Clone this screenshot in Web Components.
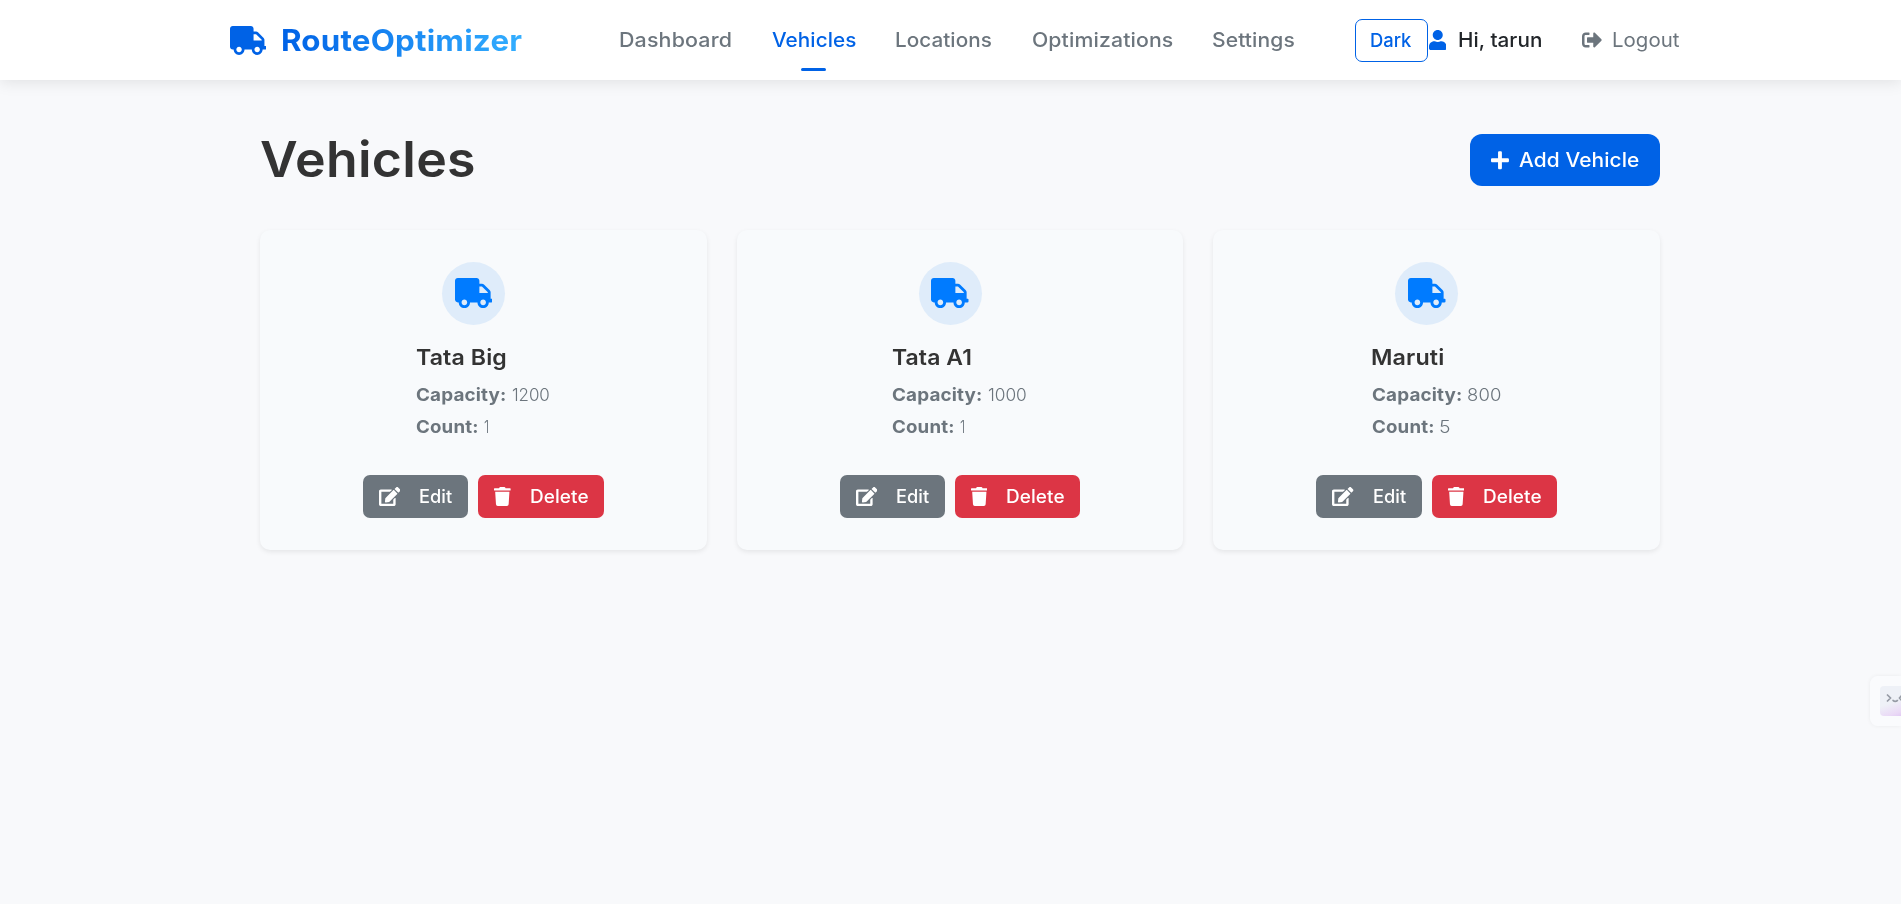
<!DOCTYPE html>
<html lang="en">
<head>
<meta charset="utf-8">
<title>RouteOptimizer</title>
<style>
html,body{margin:0;height:100%;background:#f8f9fb;overflow:hidden;font-family:Inter,"Open Sans",sans-serif}
</style>
</head>
<body>
<route-app></route-app>
<script>
const ICONS={
truck:['0 0 640 512','M624 352h-16V243.9c0-12.7-5.1-24.9-14.1-33.9L494 110.1c-9-9-21.2-14.1-33.9-14.1H416V48c0-26.5-21.5-48-48-48H48C21.5 0 0 21.5 0 48v320c0 26.5 21.5 48 48 48h16c0 53 43 96 96 96s96-43 96-96h128c0 53 43 96 96 96s96-43 96-96h48c8.8 0 16-7.2 16-16v-32c0-8.8-7.2-16-16-16zM160 464c-26.5 0-48-21.5-48-48s21.5-48 48-48 48 21.5 48 48-21.5 48-48 48zm320 0c-26.5 0-48-21.5-48-48s21.5-48 48-48 48 21.5 48 48-21.5 48-48 48zm80-208H416V144h44.1l99.9 99.9V256z'],
user:['0 0 448 512','M224 256c70.7 0 128-57.3 128-128S294.7 0 224 0 96 57.3 96 128s57.3 128 128 128zm89.6 32h-16.7c-22.2 10.2-46.9 16-72.9 16s-50.6-5.8-72.9-16h-16.7C60.2 288 0 348.2 0 422.4V464c0 26.5 21.5 48 48 48h352c26.5 0 48-21.5 48-48v-41.6c0-74.2-60.2-134.4-134.4-134.4z'],
logout:['0 0 512 512','M497 273L329 441c-15 15-41 4.5-41-17v-96H152c-13.3 0-24-10.7-24-24v-96c0-13.3 10.7-24 24-24h136V88c0-21.4 25.9-32 41-17l168 168c9.3 9.4 9.3 24.6 0 34zM192 436v-40c0-6.6-5.4-12-12-12H96c-17.7 0-32-14.3-32-32V160c0-17.7 14.3-32 32-32h84c6.6 0 12-5.4 12-12V76c0-6.6-5.4-12-12-12H96c-53 0-96 43-96 96v192c0 53 43 96 96 96h84c6.6 0 12-5.4 12-12z'],
plus:['0 0 448 512','M416 208H272V64c0-17.67-14.33-32-32-32h-32c-17.67 0-32 14.33-32 32v144H32c-17.67 0-32 14.33-32 32v32c0 17.67 14.33 32 32 32h144v144c0 17.67 14.33 32 32 32h32c17.67 0 32-14.33 32-32V304h144c17.67 0 32-14.33 32-32v-32c0-17.67-14.33-32-32-32z'],
edit:['0 0 576 512','M402.6 83.2l90.2 90.2c3.8 3.8 3.8 10 0 13.8L274.4 405.6l-92.8 10.3c-12.4 1.4-22.9-9.1-21.5-21.5l10.3-92.8L388.8 83.2c3.8-3.8 10-3.8 13.8 0zm162-22.9l-48.8-48.8c-15.2-15.2-39.9-15.2-55.2 0l-35.4 35.4c-3.8 3.8-3.8 10 0 13.8l90.2 90.2c3.8 3.8 10 3.8 13.8 0l35.4-35.4c15.2-15.3 15.2-40 0-55.2zM384 346.2V448H64V128h229.8c3.2 0 6.2-1.3 8.5-3.5l40-40c7.6-7.6 2.2-20.5-8.5-20.5H48C21.5 64 0 85.5 0 112v352c0 26.5 21.5 48 48 48h352c26.5 0 48-21.5 48-48V306.2c0-10.7-12.9-16-20.5-8.5l-40 40c-2.2 2.3-3.5 5.3-3.5 8.5z'],
trash:['0 0 448 512','M432 32H312l-9.4-18.7A24 24 0 0 0 281.1 0H166.8a23.72 23.72 0 0 0-21.4 13.3L136 32H16A16 16 0 0 0 0 48v32a16 16 0 0 0 16 16h416a16 16 0 0 0 16-16V48a16 16 0 0 0-16-16zM53.2 467a48 48 0 0 0 47.9 45h245.8a48 48 0 0 0 47.9-45L416 128H32z']
};
const define=(name,render,after)=>customElements.define(name,class extends HTMLElement{
  connectedCallback(){
    if(this.shadowRoot)return;
    this.attachShadow({mode:'open'}).innerHTML=render(this);
    if(after)after(this);
  }
});

/* Glyph from the icon table; size = rendered height. */
define('ui-icon',el=>{
  const [box,d]=ICONS[el.getAttribute('name')];
  return `<style>:host{display:block;flex:none}svg{display:block;height:${el.getAttribute('size')}px;fill:currentColor}</style><svg viewBox="${box}"><path d="${d}"/></svg>`;
});

/* Label whose glyphs are widened so that they span exactly w pixels. */
const ctx=document.createElement('canvas').getContext('2d');
define('fit-text',()=>`<style>:host{display:block;flex:none;white-space:nowrap;transform-origin:0 50%}</style><slot></slot>`,el=>{
  const cs=getComputedStyle(el),t=el.textContent,w=+el.getAttribute('w');
  ctx.font=`${cs.fontWeight} ${cs.fontSize} ${cs.fontFamily}`;
  const m=ctx.measureText(t),ink=m.actualBoundingBoxLeft+m.actualBoundingBoxRight;
  /* a small share of the difference goes to tracking, the rest to glyph width */
  const n=t.length-1,ls=n>0?(w-ink)*.15/n:0,base=ink+ls*n;
  el.style.letterSpacing=ls+'px';
  el.style.width=base+'px';
  el.style.marginRight=w-base+'px';
  el.style.transform=`scaleX(${w/base})`;
  el.style.textIndent=m.actualBoundingBoxLeft+'px';
});

define('nav-link',el=>`<style>
:host{display:flex;flex-direction:column;align-items:center;height:80px;box-sizing:border-box;padding-top:25px;color:#6c757d;font-size:20px;line-height:30px;font-weight:450}
:host([active]){color:#0062e6}
i{display:none;width:25px;height:3px;border-radius:2px;background:#0062e6;margin-top:13px}
:host([active]) i{display:block}
</style><fit-text w="${el.getAttribute('w')}">${el.getAttribute('label')}</fit-text><i></i>`);

define('app-header',()=>`<style>
:host{display:flex;align-items:center;height:80px;padding-left:230px;background:#fff;box-shadow:0 2px 15px rgba(0,0,0,.1);line-height:30px;position:relative}
ui-icon{color:#0062e6}
.brand{margin-left:16px;font-size:29.5px;font-weight:700;line-height:40px}
.brand fit-text{background:linear-gradient(90deg,#0062e6,#33aeff);-webkit-background-clip:text;background-clip:text;color:transparent}
nav{display:flex;gap:41.3px;margin-left:97.500px}
button{margin:0 1px 0 60.500px;width:73px;height:43px;border:1px solid #0062e6;border-radius:7px;background:none;color:#0062e6;font:450 18.5px/30px Inter,sans-serif;padding:0 0 0 15px;text-align:left}
.hi{padding-left:12.500px;font-size:20px;font-weight:450;color:#212529}
.out{display:flex;align-items:center;gap:11px;margin-left:40.500px;color:#6c757d;font-size:20px}
.out ui-icon{color:#6c757d}
</style>
<ui-icon name="truck" size="29"></ui-icon>
<div class="brand"><fit-text w="240">RouteOptimizer</fit-text></div>
<nav><nav-link w="110.500" label="Dashboard"></nav-link><nav-link w="83.500" label="Vehicles" active></nav-link><nav-link w="95" label="Locations"></nav-link><nav-link w="139.500" label="Optimizations"></nav-link><nav-link w="81" label="Settings"></nav-link></nav>
<button><fit-text w="41">Dark</fit-text></button>
<ui-icon name="user" size="20"></ui-icon>
<div class="hi"><fit-text w="82.500">Hi, tarun</fit-text></div>
<div class="out"><ui-icon name="logout" size="20"></ui-icon><fit-text w="67">Logout</fit-text></div>`);

define('action-button',el=>`<style>
:host{display:flex;align-items:center;box-sizing:border-box;height:43px;padding:0 16px;border-radius:7px;color:#fff;font-size:18px;line-height:30px;font-weight:500;background:#6c757d}
:host([kind=delete]){background:#dc3545}
div{padding-left:20px}
</style><ui-icon name="${el.getAttribute('icon')}" size="19"></ui-icon><div><fit-text w="${el.getAttribute('w')}">${el.getAttribute('label')}</fit-text></div>`);

define('vehicle-card',el=>{
  const a=n=>el.getAttribute(n);
  return `<style>
:host{display:flex;flex-direction:column;align-items:center;box-sizing:border-box;height:320px;padding-top:32px;border-radius:10px;background:#f8fafc;box-shadow:0 2px 5px rgba(0,0,0,.08)}
.pic{width:63px;height:63px;border-radius:50%;background:#dfecfa;color:#007bff;display:grid;place-items:center;margin-right:19.5px;box-sizing:border-box;padding-bottom:1px}
.info{width:${a('block')}px;margin-top:16px;color:#6c757d;font-size:17.5px;line-height:32px}
.name{color:#333;font-size:22px;font-weight:600;line-height:32px;margin-bottom:6px}
.row{display:flex;gap:6px}
.row fit-text:first-child{font-weight:700}
.row fit-text:last-child{font-weight:300}
.actions{display:flex;gap:10px;margin-top:32px}
</style>
<div class="pic"><ui-icon name="truck" size="30"></ui-icon></div>
<div class="info"><fit-text class="name" w="${a('nw')}">${a('name')}</fit-text>
<div class="row"><fit-text w="89.5">Capacity:</fit-text><fit-text w="${a('cw')}">${a('capacity')}</fit-text></div>
<div class="row"><fit-text w="61.5">Count:</fit-text><fit-text w="${a('tw')}">${a('count')}</fit-text></div></div>
<div class="actions"><action-button icon="edit" w="32" label="Edit"></action-button><action-button kind="delete" icon="trash" w="57" label="Delete"></action-button></div>`;
});

define('side-widget',()=>`<style>
:host{position:fixed;right:0;top:676px;width:31px;height:50px;box-sizing:border-box;padding:10px 0 10px 10px;border-radius:8px 0 0 8px;background:#fafbfd;box-shadow:0 0 4px rgba(0,0,0,.06);overflow:hidden}
div{height:30px;border-radius:4px 0 0 4px;background:linear-gradient(160deg,#eef1f7 55%,#ead9f6 88%,#e2cbf4)}
svg{display:block;fill:none;stroke:#969ba5;stroke-width:1.7}
</style><div><svg width="21" height="30" viewBox="0 0 21 30"><path d="M7 8.500l3.500 3.500L7 15.500M13 13.800c0 2 4.500 2 4.500 0M22.500 8.500L19.500 12l3 3.500"/></svg></div>`);

define('route-app',()=>`<style>
:host{display:block}
main{padding:54px 241px 0 260px}
.head{display:flex;align-items:center;justify-content:space-between;height:52px}
h1{margin:0;font-size:49px;line-height:52px;font-weight:600;color:#333;padding-left:1px}
.add{display:flex;align-items:center;width:190px;height:52px;box-sizing:border-box;padding-left:21px;gap:10.5px;border-radius:12px;background:#0062e6;color:#fff;font-size:20px;line-height:30px;font-weight:500}
.grid{display:grid;grid-template-columns:repeat(3,1fr);gap:30px;margin-top:44px}
</style>
<app-header></app-header>
<main>
<div class="head"><h1><fit-text w="212.500">Vehicles</fit-text></h1><div class="add"><ui-icon name="plus" size="20.500"></ui-icon><fit-text w="119.500">Add Vehicle</fit-text></div></div>
<div class="grid">
<vehicle-card name="Tata Big" nw="90" capacity="1200" cw="37" count="1" tw="4.500" block="134"></vehicle-card>
<vehicle-card name="Tata A1" nw="78.500" capacity="1000" cw="38" count="1" tw="4.500" block="135"></vehicle-card>
<vehicle-card name="Maruti" nw="71.500" capacity="800" cw="32.500" count="5" tw="10" block="128.500"></vehicle-card>
</div>
</main>
<side-widget></side-widget>`);
</script>
</body>
</html>
